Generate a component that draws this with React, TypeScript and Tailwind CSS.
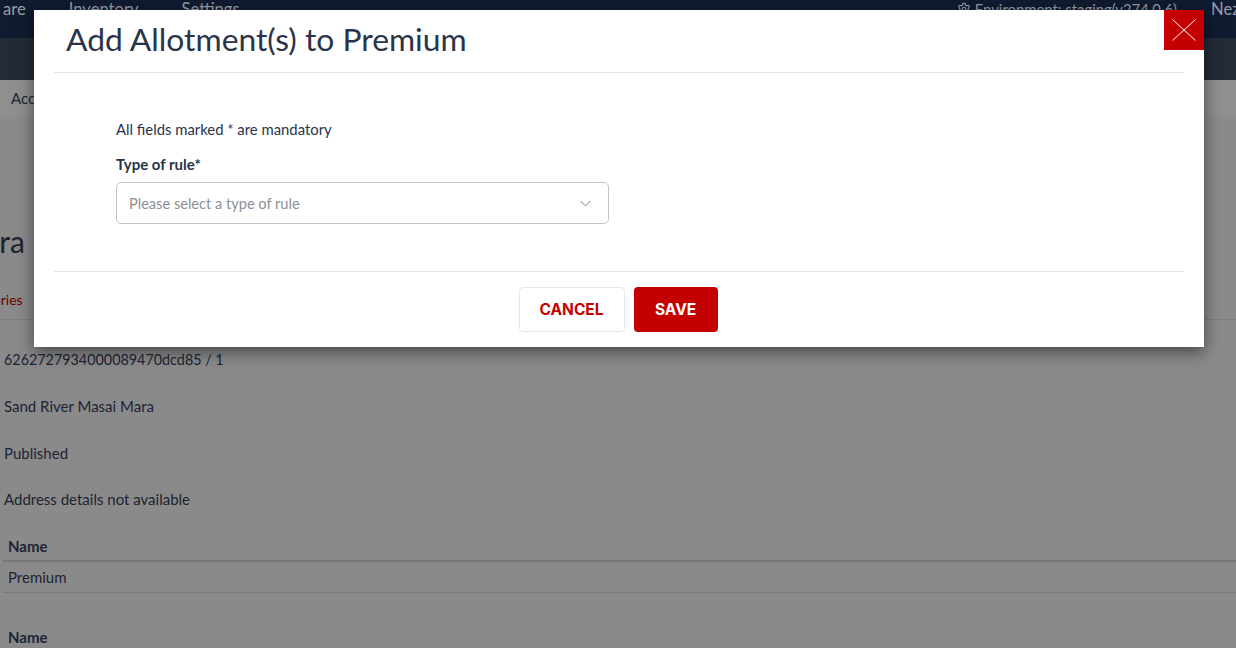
import { Settings, ChevronDown } from "lucide-react";

const font = { fontFamily: 'Lato, "Noto Sans", sans-serif' };

function Page() {
  return (
    <div className="h-[648px] w-[1236px] overflow-hidden bg-[#8a8a8a] text-[#1c2433]">
      {/* Top nav */}
      <div className="flex h-[38px] items-start justify-between bg-[#101b30] text-[16.6px] text-[#959ba7]">
        <div className="flex -translate-y-[3px] items-center">
          <span className="ml-[3px]">are</span>
          <span className="ml-[43px]">Inventory</span>
          <span className="ml-[43px]">Settings</span>
        </div>
        <div className="flex -translate-y-[3px] items-center">
          <Settings size={14} className="mr-[4px]" />
          <span className="text-[14.85px]">Environment: staging(v274.0.6)</span>
          <span className="ml-[34px] w-[25px] overflow-hidden">Nezih</span>
        </div>
      </div>
      <div className="h-[42px] bg-[#232b38]" />
      <div className="flex h-[37px] items-center bg-[#8f8f8f] pl-[11px] text-[15px]">Accommodation</div>

      <div className="pl-[4px]">
        <div className="-ml-[279px] mt-[106px] whitespace-nowrap text-[30px] leading-[36px]">Sand River Masai Mara</div>
        <div className="-ml-[4px] mt-[30px] flex h-[31px] items-start border-b border-[#7d7d7d] text-[14px] text-[#6b0000]">
          <span className="-ml-[43px]">Categories</span>
        </div>
        <div className="mt-[30px] text-[14.35px] leading-[20px]">6262727934000089470dcd85 / 1</div>
        <div className="mt-[26px] text-[15px] leading-[20px]">Sand River Masai Mara</div>
        <div className="mt-[27px] text-[15px] leading-[20px]">Published</div>
        <div className="mt-[26px] text-[15px] leading-[20px]">Address details not available</div>
      </div>

      <div className="ml-[3px] mt-[27px] text-[15px]">
        <div className="border-b-2 border-[#767676] px-[5px] pb-[4px] font-bold leading-[20px]">Name</div>
        <div className="border-b border-[#7a7a7a] px-[5px] py-[5px] leading-[20px]">Premium</div>
        <div className="mt-[34px] px-[5px] font-bold leading-[20px]">Name</div>
      </div>
    </div>
  );
}

function Modal() {
  return (
    <div className="absolute left-[34px] top-[10px] flex h-[337px] w-[1170px] flex-col bg-white shadow-[0_5px_15px_rgba(0,0,0,0.5)]">
      <button className="absolute right-0 top-0 flex h-[40px] w-[40px] items-center justify-center bg-[#c40000]">
        <svg width="24" height="22" viewBox="0 0 24 22" fill="none" stroke="white" strokeWidth="1">
          <path d="M0.5 0.5L23.5 21.5M23.5 0.5L0.5 21.5" />
        </svg>
      </button>
      <div className="mx-[20px] h-[63px] border-b border-[#e5e5e5] pl-[12px] pt-[8px]">
        <h1 className="text-[31.8px] leading-[42px] text-[#2a3449]">Add Allotment(s) to Premium</h1>
      </div>
      <div className="h-[198px] pl-[82px] pt-[46px] text-[#2a3449]">
        <p className="text-[14.85px] leading-[20px]">All fields marked * are mandatory</p>
        <label className="mt-[15px] block text-[15px] font-bold leading-[20px]">Type of rule*</label>
        <div className="mt-[8px] flex h-[42px] w-[493px] items-center justify-between rounded-[5px] border border-[#c4c4c4] pl-[12px] pr-[13px] text-[14.6px] text-[#8b8f97]">
          <span className="pt-[1px]">Please select a type of rule</span>
          <ChevronDown size={19} strokeWidth={1} className="text-[#555b66]" />
        </div>
      </div>
      <div className="mx-[20px] flex flex-1 justify-center gap-[9px] border-t border-[#e5e5e5] pr-[2px] pt-[15px]">
        <button
          className="h-[45px] w-[106px] rounded-[4px] border border-[#e8e8e8] bg-white pt-[1px] text-[15.5px] font-bold text-[#c40000]"
          style={{ fontFamily: "Inter, sans-serif" }}
        >
          CANCEL
        </button>
        <button
          className="h-[45px] w-[84px] rounded-[4px] bg-[#c40000] pt-[1px] text-[15.5px] font-bold text-white"
          style={{ fontFamily: "Inter, sans-serif" }}
        >
          SAVE
        </button>
      </div>
    </div>
  );
}

export default function App() {
  return (
    <div className="relative h-[648px] w-[1236px] overflow-hidden" style={font}>
      <Page />
      <Modal />
    </div>
  );
}
